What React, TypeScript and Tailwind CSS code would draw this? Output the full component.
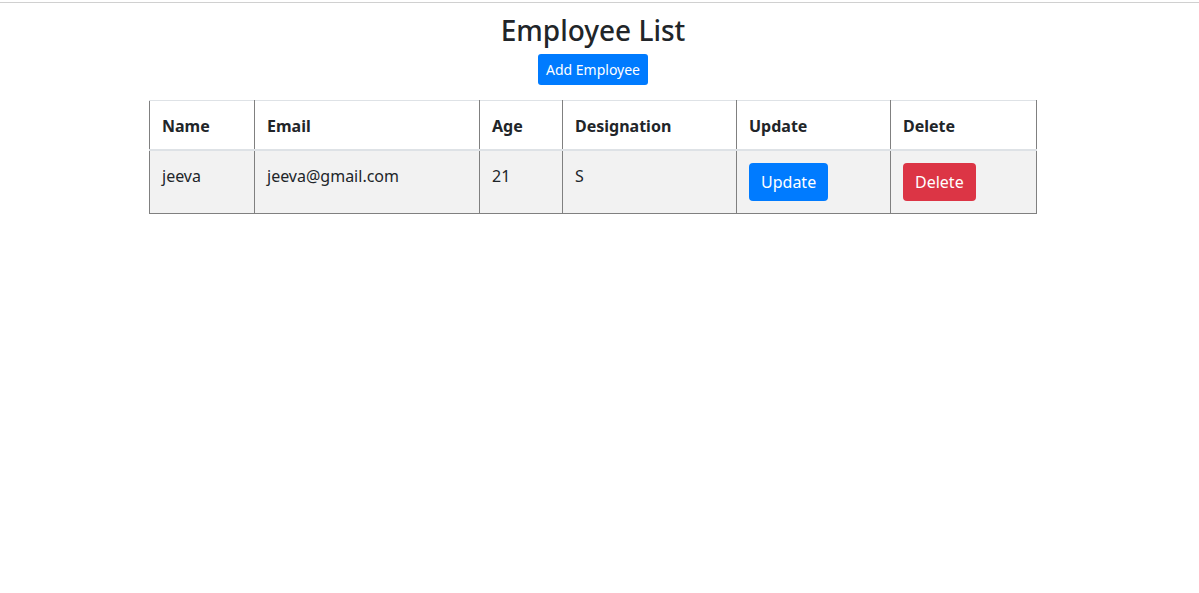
import React from "react";

const cols = [105, 225, 83, 174, 154, 146];

export default function App() {
  return (
    <div className="min-h-screen bg-white text-[#212529]" style={{ fontFamily: '"Noto Sans", "Open Sans", sans-serif' }}>
      <div className="h-[2px]" />
      <div className="border-t border-[#d0d0d0]" />
      <div className="flex flex-col items-center pr-[13px]">
        <h3 className="mt-[10px] text-[28px] leading-[34px] font-medium">Employee List</h3>
        <button className="mt-[7px] rounded-[3px] bg-[#007bff] px-2 py-[5px] text-sm leading-[21px] text-white">
          Add Employee
        </button>
        <table className="mt-[15px] table-fixed border-collapse text-base leading-6" style={{ width: 887 }}>
          <colgroup>
            {cols.map((w, i) => (
              <col key={i} style={{ width: w }} />
            ))}
          </colgroup>
          <thead>
            <tr className="border-b-2 border-[#dee2e6]">
              {["Name", "Email", "Age", "Designation", "Update", "Delete"].map((h) => (
                <th
                  key={h}
                  className="border-t border-t-[#dee2e6] border-x border-x-[#808080] px-3 pt-[13px] pb-[11px] text-left align-top font-bold"
                >
                  {h}
                </th>
              ))}
            </tr>
          </thead>
          <tbody>
            <tr className="bg-[#f2f2f2]">
              <td className="border-x border-b border-[#808080] px-3 pt-[13px] pb-[11px] align-top">jeeva</td>
              <td className="border-x border-b border-[#808080] px-3 pt-[13px] pb-[11px] align-top">jeeva@gmail.com</td>
              <td className="border-x border-b border-[#808080] px-3 pt-[13px] pb-[11px] align-top">21</td>
              <td className="border-x border-b border-[#808080] px-3 pt-[13px] pb-[11px] align-top">S</td>
              <td className="border-x border-b border-[#808080] p-3 align-top">
                <button className="rounded-[4px] bg-[#007bff] px-3 py-[7px] leading-6 text-white">Update</button>
              </td>
              <td className="border-x border-b border-[#808080] p-3 align-top">
                <button className="rounded-[4px] bg-[#dc3545] px-3 py-[7px] leading-6 text-white">Delete</button>
              </td>
            </tr>
          </tbody>
        </table>
      </div>
    </div>
  );
}
